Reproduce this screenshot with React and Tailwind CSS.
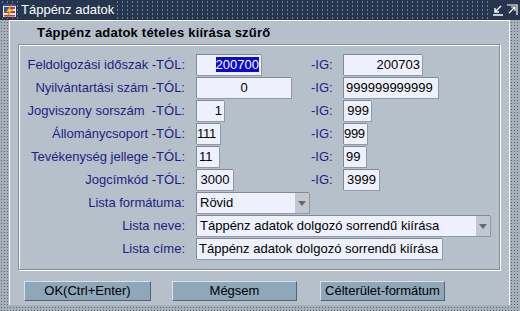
import React from "react";

// Táppénz adatok – szűrő dialog
const Field = ({ w, value, align = "left", selected, tight }) => (
  <div
    className={`h-[21px] shrink-0 bg-[#eef0fb] border-t border-l border-[#7e8a96] border-b-white border-r-white shadow-[1px_1px_0_#8f9aa5] text-[13px] leading-[19px] text-black whitespace-nowrap overflow-hidden ${
      tight ? "px-0 tracking-[-0.3px]" : "px-[2px]"
    } ${align === "right" ? "text-right" : align === "center" ? "text-center" : "text-left"}`}
    style={{ width: w }}
  >
    {selected ? <span className="bg-[#0a0ad0] text-white">{value}</span> : value}
  </div>
);

const Select = ({ w, value }) => (
  <div
    className="h-[21px] shrink-0 flex bg-[#eef0fb] border-t border-l border-[#7e8a96] border-b-white border-r-white shadow-[1px_1px_0_#8f9aa5] text-[13px] leading-[19px] text-black"
    style={{ width: w }}
  >
    <div className="flex-1 px-[3px] whitespace-nowrap overflow-hidden">{value}</div>
    <div className="w-[14px] bg-[#c3c8ce] flex items-center justify-center">
      <svg width="8" height="5" viewBox="0 0 8 5">
        <path d="M0 0h8L4 5z" fill="#5d6b7a" />
      </svg>
    </div>
  </div>
);

const rows = [
  { label: "Feldolgozási időszak -TÓL:", from: { w: 65, v: "200700", a: "right", sel: true }, to: { w: 79, v: "200703", a: "right" } },
  { label: "Nyilvántartási szám -TÓL:", from: { w: 95, v: "0", a: "center" }, to: { w: 95, v: "999999999999" } },
  { label: "Jogviszony sorszám  -TÓL:", from: { w: 28, v: "1", a: "right" }, to: { w: 28, v: "999", a: "right" } },
  { label: "Állománycsoport -TÓL:", from: { w: 24, v: "111", t: true }, to: { w: 24, v: "999", t: true } },
  { label: "Tevékenység jellege -TÓL:", from: { w: 23, v: "11" }, to: { w: 23, v: "99" } },
  { label: "Jogcímkód -TÓL:", from: { w: 37, v: "3000", a: "center" }, to: { w: 36, v: "3999", a: "center" } },
];

const Label = ({ children }) => (
  <div className="w-[166px] shrink-0 text-right text-[13px] leading-[21px] text-[#1b1f84] whitespace-pre mr-[11px]">
    {children}
  </div>
);

const WinIcon = () => (
  <svg width="15" height="15" viewBox="0 0 15 15">
    <rect x="0.5" y="0.5" width="14" height="14" fill="#e8eaf0" stroke="#2c3350" />
    <rect x="1" y="1" width="13" height="2" fill="#3a48a8" />
    <rect x="2" y="4" width="11" height="2" fill="#d03030" />
    <rect x="2" y="8" width="11" height="2" fill="#d03030" />
    <rect x="2" y="4" width="4" height="4" fill="#3050c0" />
    <rect x="2" y="12" width="11" height="1.5" fill="#d03030" />
    <path d="M9 2L4 9h3l-2 5 6-8H8l2-4z" fill="#f4d020" stroke="#806000" strokeWidth="0.5" />
  </svg>
);

export default function App() {
  return (
    <div className="w-[520px] h-[311px] overflow-hidden bg-[#a6b0ba] bg-[radial-gradient(#5b6571_0.8px,transparent_1px)] [background-size:3px_3px] font-['Liberation_Sans',Arial,sans-serif]">
      {/* Title bar */}
      <div className="h-[20px] flex items-center bg-[#27364f] bg-[radial-gradient(#6f7d94_0.9px,transparent_1.1px)] [background-size:5px_4px] border-b border-[#2a3140]">
        <div className="ml-[2px] mt-[1px] flex items-center">
          <WinIcon />
        </div>
        <span className="ml-[3px] px-[1px] bg-[#27364f] text-white text-[13px] leading-[18px]">Táppénz adatok</span>
        <div className="ml-auto flex items-center gap-[2px] pr-[2px] bg-[#27364f] h-full">
          <svg width="12" height="12" viewBox="0 0 12 12">
            <path d="M9 2L3 8M3 4v4h4M1 11h10" stroke="white" strokeWidth="1.4" fill="none" />
          </svg>
          <svg width="12" height="12" viewBox="0 0 12 12">
            <path d="M3 9l6-6M5 3h4v4M1 1h10v10" stroke="white" strokeWidth="1.2" fill="none" />
          </svg>
        </div>
      </div>

      <div className="pl-[9px] pr-[10px] h-[285px]">
        <div className="h-full bg-[#b6c0ca] border-l border-t border-r border-white flex flex-col">
          {/* Heading */}
          <div className="h-[23px] pl-[27px] text-[13px] font-bold leading-[23px] text-black tracking-[0.2px]">
            Táppénz adatok tételes kiírása szűrő
          </div>

          {/* Group box */}
          <div className="ml-[8px] w-[482px] h-[226px] border border-[#858e98] shadow-[inset_1px_1px_0_white,1px_1px_0_white] pt-[9px] flex flex-col gap-[2px]">
            {rows.map((r) => (
              <div key={r.label} className="flex items-center h-[21px]">
                <Label>{r.label}</Label>
                <div className="w-[115px] shrink-0">
                  <Field w={r.from.w} value={r.from.v} align={r.from.a} selected={r.from.sel} tight={r.from.t} />
                </div>
                <div className="w-[32px] shrink-0 text-[13px] leading-[21px] text-[#1b1f84]">-IG:</div>
                <Field w={r.to.w} value={r.to.v} align={r.to.a} tight={r.to.t} />
              </div>
            ))}
            <div className="flex items-center h-[21px]">
              <Label>Lista formátuma:</Label>
              <Select w={113} value="Rövid" />
            </div>
            <div className="flex items-center h-[21px]">
              <Label>Lista neve:</Label>
              <Select w={294} value="Táppénz adatok dolgozó sorrendű kiírása" />
            </div>
            <div className="flex items-center h-[21px]">
              <Label>Lista címe:</Label>
              <Field w={246} value="Táppénz adatok dolgozó sorrendű kiírása" />
            </div>
          </div>

          {/* Buttons */}
          <div className="mt-[11px] flex">
            {[
              ["OK(Ctrl+Enter)", "ml-[14px] w-[127px]"],
              ["Mégsem", "ml-[21px] w-[125px]"],
              ["Célterület-formátum", "ml-[23px] w-[125px]"],
            ].map(([t, c]) => (
              <button
                key={t}
                className={`${c} h-[20px] bg-[#8ea7b9] border border-t-[#d8e2ea] border-l-[#d8e2ea] border-b-[#56626e] border-r-[#56626e] text-[13px] font-normal leading-[18px] text-black`}
              >
                {t}
              </button>
            ))}
          </div>
        </div>
      </div>
    </div>
  );
}
